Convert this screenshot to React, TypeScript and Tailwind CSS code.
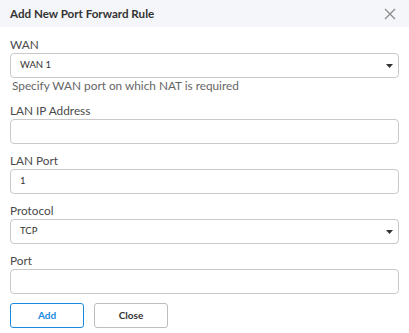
import React from "react";

const Label = ({ children }: { children: React.ReactNode }) => (
  <div className="text-[11.8px] leading-[14px] text-[#4a4a4a]">{children}</div>
);

const Box = ({ value, select }: { value?: string; select?: boolean }) => (
  <div className="mt-[1px] h-[25px] w-full rounded-[4px] border border-[#c9c9c9] bg-white flex items-center justify-between pl-[9px] pr-[5px]">
    <span className="text-[9.5px] text-[#333]">{value}</span>
    {select && (
      <svg width="7" height="4" viewBox="0 0 7 4">
        <path d="M0 0 L7 0 L3.5 4 Z" fill="#333" />
      </svg>
    )}
  </div>
);

export default function App() {
  return (
    <div
      className="w-[409px] h-[333px] bg-white overflow-hidden"
      style={{ fontFamily: "Lato, 'Open Sans', sans-serif" }}
    >
      <div className="h-[27px] bg-[#f5f6fa] flex items-center justify-between pl-[10px] pr-[13px]">
        <span className="text-[11.6px] font-bold text-[#333]">Add New Port Forward Rule</span>
        <svg width="12" height="12" viewBox="0 0 12 12">
          <path d="M1 1 L11 11 M11 1 L1 11" stroke="#8a8a8a" strokeWidth="1.2" />
        </svg>
      </div>
      <div className="px-[10px] pt-[11px]">
        <Label>WAN</Label>
        <Box value="WAN 1" select />
        <div className="mt-[1px] pl-[2px] text-[11.8px] leading-[14px] text-[#666]">
          Specify WAN port on which NAT is required
        </div>
        <div className="mt-[11px]">
          <Label>LAN IP Address</Label>
          <Box />
        </div>
        <div className="mt-[10px]">
          <Label>LAN Port</Label>
          <Box value="1" />
        </div>
        <div className="mt-[10px]">
          <Label>Protocol</Label>
          <Box value="TCP" select />
        </div>
        <div className="mt-[10px]">
          <Label>Port</Label>
          <Box />
        </div>
        <div className="mt-[9px] flex gap-[10px]">
          <button className="w-[74px] h-[25px] rounded-[3px] border border-[#1a8ae0] text-[10px] font-bold text-[#1a8ae0] bg-white">
            Add
          </button>
          <button className="w-[74px] h-[25px] rounded-[3px] border border-[#bdbdbd] text-[10px] font-bold text-[#333] bg-white">
            Close
          </button>
        </div>
      </div>
    </div>
  );
}
